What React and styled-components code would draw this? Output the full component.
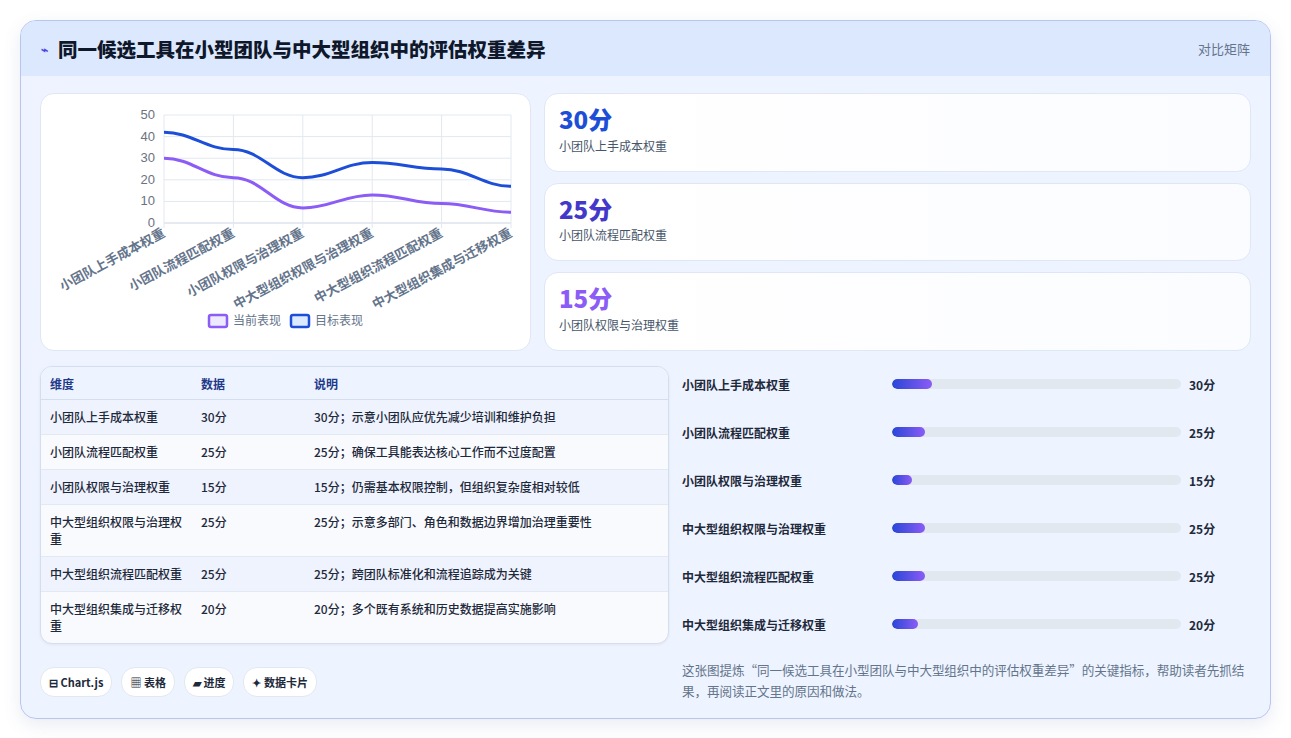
import React from "react";
import styled, { createGlobalStyle } from "styled-components";

const Global = createGlobalStyle`
  body { margin: 0; background: #fff; font-family: "Noto Sans CJK SC", "Noto Sans", sans-serif; }
`;

const Page = styled.div`padding: 20px 20px 22px 20px;`;
const Card = styled.div`
  border: 1px solid #b8c5ef; border-radius: 16px; overflow: hidden;
  background: linear-gradient(135deg, #eef3ff 0%, #edf4ff 100%);
  box-shadow: 0 6px 18px rgba(80,100,160,0.12);
`;
const Header = styled.div`
  height: 55px; background: #dce8fd; display: flex; align-items: center;
  justify-content: space-between; padding: 0 20px;
`;
const Title = styled.h1`
  margin: 0; font-size: 19.5px; font-weight: 800; color: #0f172a; display: flex; align-items: center; gap: 10px;
`;
const Meta = styled.span`font-size: 13px; color: #64748b;`;
const Body = styled.div`padding: 17px 19px 17px 19px; display: flex; flex-direction: column; gap: 15px;`;
const TopRow = styled.div`display: grid; grid-template-columns: 491px 1fr; gap: 13px; height: 258px;`;
const Panel = styled.div`
  background: #fff; border: 1px solid #dfe7f5; border-radius: 14px; position: relative;
`;
const Stats = styled.div`display: grid; grid-template-rows: repeat(3, 1fr); gap: 11px;`;
const Stat = styled.div`
  background: linear-gradient(90deg, #fff, #fbfcff); border: 1px solid #dfe7f5; border-radius: 14px;
  padding: 4px 14px 10px; display: flex; flex-direction: column; justify-content: center;
`;
const StatNum = styled.div`font-size: 24px; font-weight: 800; color: ${p => p.c}; line-height: 1.2;`;
const StatLabel = styled.div`font-size: 12px; color: #475569; margin-top: 3px;`;
const BottomRow = styled.div`display: grid; grid-template-columns: 629px 1fr; gap: 13px;`;
const Left = styled.div`display: flex; flex-direction: column; gap: 23px;`;
const Table = styled.table`
  width: 100%; border-collapse: separate; border-spacing: 0; border: 1px solid #d5deee; border-radius: 12px;
  overflow: hidden; font-size: 12px; background: #f8fafd;
  box-shadow: 0 1px 3px rgba(0,0,0,0.06);
  th { text-align: left; font-weight: 600; color: #1e3a8a; background: #eef4ff; height: 32px; padding: 0 9px; border-bottom: 1px solid #d5deee; }
  td { color: #1e293b; font-weight: 500; padding: 8px 9px 9px; vertical-align: top; line-height: 17px; border-bottom: 1px solid #e3e9f3; }
  tr:nth-child(odd) td { background: #eef3fd; }
  tr:last-child td { border-bottom: none; }
`;
const Tags = styled.div`display: flex; gap: 9px;`;
const Tag = styled.span`
  font-size: 11px; font-weight: 600; color: #1e293b; background: #fff; border: 1px solid #e2e8f0;
  border-radius: 14px; padding: 6px 8px;
`;
const Right = styled.div`display: flex; flex-direction: column; padding-top: 9px;`;
const Bars = styled.div`display: flex; flex-direction: column; gap: 30px;`;
const BarRow = styled.div`display: grid; grid-template-columns: 210px 289px 1fr; align-items: center; height: 18px; font-size: 12px; font-weight: 600; color: #1e293b;`;
const Track = styled.div`height: 10px; border-radius: 5px; background: #e2e8f0; overflow: hidden;`;
const Fill = styled.div`height: 100%; border-radius: 5px; background: linear-gradient(90deg, #2946d6, #8b5cf6);`;
const Val = styled.span`padding-left: 8px;`;
const Note = styled.p`margin: 26px 0 0; font-size: 12.6px; color: #64748b; line-height: 21px; letter-spacing: -0.1px;`;

const labels = ["小团队上手成本权重","小团队流程匹配权重","小团队权限与治理权重","中大型组织权限与治理权重","中大型组织流程匹配权重","中大型组织集成与迁移权重"];
const cur = [30,21,7,13,9,5];
const tgt = [42,34,21,28,25,17];

function Chart() {
  const x0 = 123, x1 = 470, y0 = 129, yT = 21;
  const xs = labels.map((_, i) => x0 + (x1 - x0) * i / 5);
  const y = v => y0 - (y0 - yT) * v / 50;
  const path = vals => {
    const p = vals.map((v, i) => [xs[i], y(v)]);
    let d = `M${p[0][0]},${p[0][1]}`;
    for (let i = 1; i < p.length; i++) {
      const dx = (p[i][0] - p[i-1][0]) * 0.4;
      d += ` C${p[i-1][0]+dx},${p[i-1][1]} ${p[i][0]-dx},${p[i][1]} ${p[i][0]},${p[i][1]}`;
    }
    return d;
  };
  return (
    <svg width="489" height="256" style={{ display: "block" }}>
      {[0,10,20,30,40,50].map(v => (
        <g key={v}>
          <line x1={x0} x2={x1} y1={y(v)} y2={y(v)} stroke={v===0?"#cbd5e1":"#e2e8f0"} />
          <text x={x0-9} y={y(v)+4} fontSize="13" fill="#6b7280" textAnchor="end" fontFamily="Liberation Sans, sans-serif">{v}</text>
        </g>
      ))}
      {xs.map((xx, i) => (
        <g key={i}>
          <line x1={xx} x2={xx} y1={yT} y2={y0+5} stroke="#e2e8f0" />
          <text transform={`translate(${xx+2},${y0+13}) rotate(-28)`} fontSize="13" fontWeight="700" fill="#64748b" textAnchor="end">{labels[i]}</text>
        </g>
      ))}
      <path d={path(cur)} fill="none" stroke="#8b5cf6" strokeWidth="3" />
      <path d={path(tgt)} fill="none" stroke="#1d4ed8" strokeWidth="3" />
      <rect x="168" y="221" width="18" height="12" rx="2" fill="#ede9fe" stroke="#8b5cf6" strokeWidth="2.5" />
      <text x="192" y="231" fontSize="12" fill="#64748b">当前表现</text>
      <rect x="250" y="221" width="18" height="12" rx="2" fill="#dbeafe" stroke="#1d4ed8" strokeWidth="2.5" />
      <text x="274" y="231" fontSize="12" fill="#64748b">目标表现</text>
    </svg>
  );
}

const rows = [
  ["小团队上手成本权重","30分","30分；示意小团队应优先减少培训和维护负担"],
  ["小团队流程匹配权重","25分","25分；确保工具能表达核心工作而不过度配置"],
  ["小团队权限与治理权重","15分","15分；仍需基本权限控制，但组织复杂度相对较低"],
  ["中大型组织权限与治理权重","25分","25分；示意多部门、角色和数据边界增加治理重要性"],
  ["中大型组织流程匹配权重","25分","25分；跨团队标准化和流程追踪成为关键"],
  ["中大型组织集成与迁移权重","20分","20分；多个既有系统和历史数据提高实施影响"],
];
const bars = [["小团队上手成本权重",30,14],["小团队流程匹配权重",25,11.5],["小团队权限与治理权重",15,7],["中大型组织权限与治理权重",25,11.5],["中大型组织流程匹配权重",25,11.5],["中大型组织集成与迁移权重",20,9]];

export default function App() {
  return (
    <Page>
      <Global />
      <Card>
        <Header>
          <Title><span style={{ color: "#4f46e5", fontSize: 12 }}>⌁</span>同一候选工具在小型团队与中大型组织中的评估权重差异</Title>
          <Meta>对比矩阵</Meta>
        </Header>
        <Body>
          <TopRow>
            <Panel><Chart /></Panel>
            <Stats>
              <Stat><StatNum c="#1d4ed8">30分</StatNum><StatLabel>小团队上手成本权重</StatLabel></Stat>
              <Stat><StatNum c="#4338ca">25分</StatNum><StatLabel>小团队流程匹配权重</StatLabel></Stat>
              <Stat><StatNum c="#8b5cf6">15分</StatNum><StatLabel>小团队权限与治理权重</StatLabel></Stat>
            </Stats>
          </TopRow>
          <BottomRow>
            <Left>
              <Table>
                <thead><tr><th style={{ width: 133 }}>维度</th><th style={{ width: 95 }}>数据</th><th>说明</th></tr></thead>
                <tbody>
                  {rows.map(r => <tr key={r[0]}><td>{r[0]}</td><td>{r[1]}</td><td>{r[2]}</td></tr>)}
                </tbody>
              </Table>
              <Tags>
                <Tag>⊟ Chart.js</Tag><Tag>▦ 表格</Tag><Tag>▰ 进度</Tag><Tag>✦ 数据卡片</Tag>
              </Tags>
            </Left>
            <Right>
              <Bars>
                {bars.map(b => (
                  <BarRow key={b[0]}>
                    <span>{b[0]}</span>
                    <Track><Fill style={{ width: `${b[2]}%` }} /></Track>
                    <Val>{b[1]}分</Val>
                  </BarRow>
                ))}
              </Bars>
              <Note>这张图提炼“同一候选工具在小型团队与中大型组织中的评估权重差异”的关键指标，帮助读者先抓结果，再阅读正文里的原因和做法。</Note>
            </Right>
          </BottomRow>
        </Body>
      </Card>
    </Page>
  );
}
